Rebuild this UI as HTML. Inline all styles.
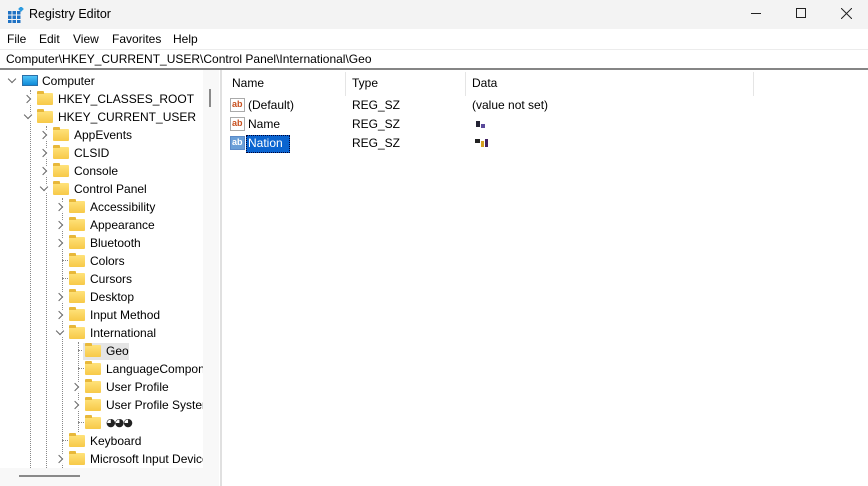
<!DOCTYPE html>
<html><head><meta charset="utf-8"><style>
*{margin:0;padding:0;box-sizing:border-box}
body{width:868px;height:486px;overflow:hidden;background:#fff;font-family:"Segoe UI","Liberation Sans","DejaVu Sans",sans-serif;font-size:12px;color:#000;position:relative}
.abs{position:absolute}
.title{left:0;top:0;width:868px;height:29px;background:#f3f3f3}
.menu{left:0;top:29px;width:868px;height:20px;background:#fff}
.menu span{position:absolute;top:2px;font-size:12px}
.addr{left:0;top:49px;width:868px;height:21px;background:#fff;border-top:1px solid #ececec;border-bottom:2px solid #858585;padding-left:6px;line-height:19px}
.tree{left:0;top:70px;width:203px;height:416px;background:#fff;overflow:hidden}
.row{position:absolute;height:18px;line-height:18px;white-space:nowrap}
.fold{position:absolute;width:16px;height:12px;top:3px;background:linear-gradient(#ffe27a,#f7c948);border-radius:1px}
.fold:before{content:"";position:absolute;left:0;top:-2px;width:7px;height:3px;background:#e8b83a;border-radius:1px 1px 0 0}
.cr,.cd{position:absolute;width:6px;height:6px;border-right:1px solid #666;border-bottom:1px solid #666;background:#fff;box-shadow:2px 2px 0 1px #fff}
.cr{top:6px;transform:rotate(-45deg)}
.cd{top:4px;transform:rotate(45deg)}
.vs{position:absolute;border-left:1px dotted #888}
.hs{position:absolute;border-top:1px dotted #888;height:0}
.list{left:223px;top:70px;width:645px;height:416px;background:#fff}
.hdr{position:absolute;top:6px;font-size:12px}
.sep{position:absolute;top:72px;width:1px;height:24px;background:#e5e5e5}
.ab{position:absolute;width:15px;height:14px;border:1px solid #aaa;background:#fff;font-size:9px;font-weight:bold;color:#c8501e;line-height:11px;text-align:left;padding-left:1px}
</style></head><body>
<div class="abs title">
 <svg class="abs" style="left:8px;top:7px" width="16" height="16" viewBox="0 0 16 16">
  <g fill="#1f72c4"><rect x="0" y="4" width="3.5" height="3.5"/><rect x="4.5" y="4" width="3.5" height="3.5"/><rect x="9" y="4" width="3.5" height="3.5"/><rect x="0" y="8.5" width="3.5" height="3.5"/><rect x="4.5" y="8.5" width="3.5" height="3.5"/><rect x="9" y="8.5" width="3.5" height="3.5"/><rect x="0" y="13" width="3.5" height="3"/><rect x="4.5" y="13" width="3.5" height="3"/><rect x="9" y="13" width="3.5" height="3"/></g>
  <rect x="11" y="0" width="4" height="4" fill="#2c9be0" transform="rotate(45 13 2)"/>
 </svg>
 <span class="abs" style="left:29px;top:7px;font-size:12.5px">Registry Editor</span>
 <div class="abs" style="left:751px;top:13px;width:10px;height:1px;background:#222"></div>
 <div class="abs" style="left:796px;top:8px;width:10px;height:10px;border:1px solid #222"></div>
 <svg class="abs" style="left:841px;top:8px" width="11" height="11"><path d="M0 0L11 11M11 0L0 11" stroke="#222" stroke-width="1"/></svg>
</div>
<div class="abs menu"><span style="left:7px;top:3px">File</span><span style="left:39px;top:3px">Edit</span><span style="left:73px;top:3px">View</span><span style="left:112px;top:3px">Favorites</span><span style="left:173px;top:3px">Help</span></div>
<div class="abs addr">Computer\HKEY_CURRENT_USER\Control Panel\International\Geo</div>

<div class="abs tree">
 <div class="vs" style="left:30px;top:20px;height:400px"></div>
 <div class="vs" style="left:46px;top:56px;height:360px"></div>
 <div class="vs" style="left:62px;top:128px;height:300px"></div>
 <div class="vs" style="left:78px;top:272px;height:90px"></div>
 <div class="hs" style="left:62px;top:190px;width:6px"></div>
 <div class="hs" style="left:62px;top:208px;width:6px"></div>
 <div class="hs" style="left:62px;top:370px;width:6px"></div>
 <div class="hs" style="left:78px;top:280px;width:6px"></div>
 <div class="hs" style="left:78px;top:298px;width:6px"></div>
 <div class="hs" style="left:78px;top:352px;width:6px"></div>

 <div class="row" style="top:2px;left:0"><span class="cd" style="left:9px"></span>
  <div class="abs" style="left:22px;top:3px;width:16px;height:11px;background:linear-gradient(#4fc3f7,#0f8ad8);border:1px solid #2a6fa8"></div>
  <span class="abs" style="left:42px">Computer</span></div>
 <div class="row" style="top:20px;left:0"><span class="cr" style="left:24px"></span><div class="fold" style="left:37px"></div><span class="abs" style="left:58px">HKEY_CLASSES_ROOT</span></div>
 <div class="row" style="top:38px;left:0"><span class="cd" style="left:25px"></span><div class="fold" style="left:37px"></div><span class="abs" style="left:58px">HKEY_CURRENT_USER</span></div>
 <div class="row" style="top:56px;left:0"><span class="cr" style="left:40px"></span><div class="fold" style="left:53px"></div><span class="abs" style="left:74px">AppEvents</span></div>
 <div class="row" style="top:74px;left:0"><span class="cr" style="left:40px"></span><div class="fold" style="left:53px"></div><span class="abs" style="left:74px">CLSID</span></div>
 <div class="row" style="top:92px;left:0"><span class="cr" style="left:40px"></span><div class="fold" style="left:53px"></div><span class="abs" style="left:74px">Console</span></div>
 <div class="row" style="top:110px;left:0"><span class="cd" style="left:41px"></span><div class="fold" style="left:53px"></div><span class="abs" style="left:74px">Control Panel</span></div>
 <div class="row" style="top:128px;left:0"><span class="cr" style="left:56px"></span><div class="fold" style="left:69px"></div><span class="abs" style="left:90px">Accessibility</span></div>
 <div class="row" style="top:146px;left:0"><span class="cr" style="left:56px"></span><div class="fold" style="left:69px"></div><span class="abs" style="left:90px">Appearance</span></div>
 <div class="row" style="top:164px;left:0"><span class="cr" style="left:56px"></span><div class="fold" style="left:69px"></div><span class="abs" style="left:90px">Bluetooth</span></div>
 <div class="row" style="top:182px;left:0"><div class="fold" style="left:69px"></div><span class="abs" style="left:90px">Colors</span></div>
 <div class="row" style="top:200px;left:0"><div class="fold" style="left:69px"></div><span class="abs" style="left:90px">Cursors</span></div>
 <div class="row" style="top:218px;left:0"><span class="cr" style="left:56px"></span><div class="fold" style="left:69px"></div><span class="abs" style="left:90px">Desktop</span></div>
 <div class="row" style="top:236px;left:0"><span class="cr" style="left:56px"></span><div class="fold" style="left:69px"></div><span class="abs" style="left:90px">Input Method</span></div>
 <div class="row" style="top:254px;left:0"><span class="cd" style="left:57px"></span><div class="fold" style="left:69px"></div><span class="abs" style="left:90px">International</span></div>
 <div class="abs" style="left:83px;top:273px;width:46px;height:17px;background:#e5e5e5"></div>
 <div class="row" style="top:272px;left:0"><div class="fold" style="left:85px"></div><span class="abs" style="left:106px">Geo</span></div>
 <div class="row" style="top:290px;left:0"><div class="fold" style="left:85px"></div><span class="abs" style="left:106px">LanguageComponents</span></div>
 <div class="row" style="top:308px;left:0"><span class="cr" style="left:72px"></span><div class="fold" style="left:85px"></div><span class="abs" style="left:106px">User Profile</span></div>
 <div class="row" style="top:326px;left:0"><span class="cr" style="left:72px"></span><div class="fold" style="left:85px"></div><span class="abs" style="left:106px">User Profile System</span></div>
 <div class="row" style="top:344px;left:0"><div class="fold" style="left:85px"></div><span class="abs" style="left:106px;font-family:'DejaVu Sans',sans-serif;font-size:11px;color:#222;letter-spacing:-1px">&#9685;&#9685;&#9685;</span></div>
 <div class="row" style="top:362px;left:0"><div class="fold" style="left:69px"></div><span class="abs" style="left:90px">Keyboard</span></div>
 <div class="row" style="top:380px;left:0"><span class="cr" style="left:56px"></span><div class="fold" style="left:69px"></div><span class="abs" style="left:90px">Microsoft Input Devices</span></div>
 <div class="abs" style="left:0;top:398px;width:203px;height:18px;background:#f8f8f8"></div>
 <div class="abs" style="left:19px;top:405px;width:61px;height:2px;background:#8a8a8a"></div>
</div>
<div class="abs" style="left:203px;top:70px;width:16px;height:416px;background:#f8f8f8"></div>
<div class="abs" style="left:209px;top:89px;width:2px;height:18px;background:#8a8a8a"></div>
<div class="abs" style="left:219px;top:70px;width:3px;height:416px;background:#e0e0e0;border-left:1px solid #fff"></div>

<div class="abs list">
 <span class="hdr" style="left:9px">Name</span><span class="hdr" style="left:129px">Type</span><span class="hdr" style="left:249px">Data</span>
</div>
<div class="sep" style="left:345px"></div><div class="sep" style="left:465px"></div><div class="sep" style="left:753px"></div>

<div class="ab" style="left:230px;top:98px">ab</div>
<span class="abs" style="left:248px;top:98px">(Default)</span>
<span class="abs" style="left:352px;top:98px">REG_SZ</span>
<span class="abs" style="left:472px;top:98px">(value not set)</span>

<div class="ab" style="left:230px;top:117px">ab</div>
<span class="abs" style="left:248px;top:117px">Name</span>
<span class="abs" style="left:352px;top:117px">REG_SZ</span>
<div class="abs" style="left:476px;top:121px;width:4px;height:6px;background:#223"></div>
<div class="abs" style="left:481px;top:124px;width:4px;height:4px;background:#5a4a9a"></div>

<div class="ab" style="left:230px;top:136px;background:#6a9fd8;color:#fff;border-color:#5a8ac8">ab</div>
<div class="abs" style="left:246px;top:135px;width:44px;height:18px;background:#0a64d0;border:1px dotted #003"></div>
<span class="abs" style="left:248px;top:136px;color:#fff">Nation</span>
<span class="abs" style="left:352px;top:136px">REG_SZ</span>
<div class="abs" style="left:475px;top:139px;width:5px;height:4px;background:#222"></div>
<div class="abs" style="left:481px;top:141px;width:3px;height:6px;background:#d4a020"></div>
<div class="abs" style="left:485px;top:139px;width:3px;height:8px;background:#402060"></div>
</body></html>
